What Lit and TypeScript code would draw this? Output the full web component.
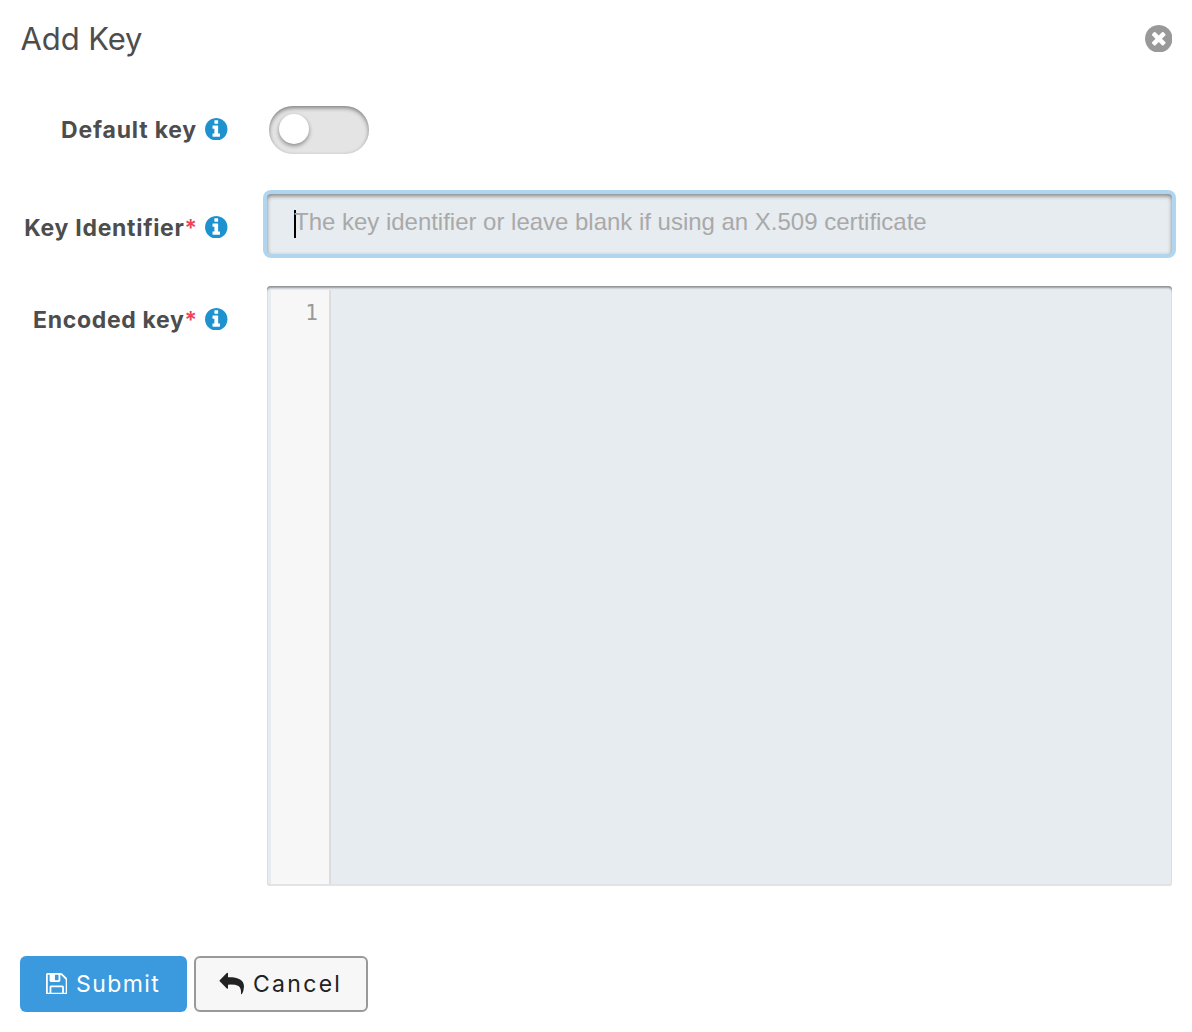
import { LitElement, html, css, svg } from "lit";
import { customElement } from "lit/decorators.js";

const INFO = "M1152 1376v-160q0-14-9-23t-23-9h-96v-512q0-14-9-23t-23-9h-320q-14 0-23 9t-9 23v160q0 14 9 23t23 9h96v320h-96q-14 0-23 9t-9 23v160q0 14 9 23t23 9h448q14 0 23-9t9-23zm-128-896v-160q0-14-9-23t-23-9h-192q-14 0-23 9t-9 23v160q0 14 9 23t23 9h192q14 0 23-9t9-23zm640 416q0 209-103 385.5t-279.5 279.5-385.5 103-385.5-103-279.5-279.5-103-385.5 103-385.5 279.5-279.5 385.5-103 385.5 103 279.5 279.5 103 385.5z";
const CLOSE = "M1277 1122q0-26-19-45l-181-181 181-181q19-19 19-45 0-27-19-46l-90-90q-19-19-46-19-26 0-45 19l-181 181-181-181q-19-19-45-19-27 0-46 19l-90 90q-19 19-19 46 0 26 19 45l181 181-181 181q-19 19-19 45 0 27 19 46l90 90q19 19 46 19 26 0 45-19l181-181 181 181q19 19 45 19 27 0 46-19l90-90q19-19 19-46zm387-226q0 209-103 385.5t-279.5 279.5-385.5 103-385.5-103-279.5-279.5-103-385.5 103-385.5 279.5-279.5 385.5-103 385.5 103 279.5 279.5 103 385.5z";
const SAVE = "M512 1536h768v-384h-768v384zm896 0h128v-896q0-14-10-38.5t-20-34.5l-281-281q-10-10-34-20t-39-10v416q0 40-28 68t-68 28h-576q-40 0-68-28t-28-68v-416h-128v1280h128v-416q0-40 28-68t68-28h832q40 0 68 28t28 68v416zm-384-928v-320q0-13-9.5-22.5t-22.5-9.5h-192q-13 0-22.5 9.5t-9.5 22.5v320q0 13 9.5 22.5t22.5 9.5h192q13 0 22.5-9.5t9.5-22.5zm640 32v928q0 40-28 68t-68 28h-1344q-40 0-68-28t-28-68v-1344q0-40 28-68t68-28h928q40 0 88 20t76 48l280 280q28 28 48 76t20 88z";

const glyph = (d: string) => svg`<path d=${d} fill="currentColor"></path>`;

@customElement("app-root")
export class AppRoot extends LitElement {
  static styles = css`
    :host { display: block; font-family: Inter, "Liberation Sans", sans-serif; color: #4d4d4d; }
    * { box-sizing: border-box; }
    .dialog { height: 1032px; background: #fff; display: flex; flex-direction: column; }
    .head { height: 78px; padding: 0 20px 1px 20.5px; display: flex; align-items: center; justify-content: space-between; }
    .title { margin: 0; font-size: 31px; font-weight: 400; line-height: 40px; letter-spacing: -0.1px; }
    .close { width: 27.5px; height: 27.5px; color: #999; display: block; }
    .row { display: grid; grid-template-columns: 227.5px 1fr; column-gap: 39.5px; padding-right: 20px; }
    .label { display: flex; justify-content: flex-end; align-items: center; height: 32px; font-size: 23px; font-weight: 700; letter-spacing: 0.7px; white-space: nowrap; }
    .req { color: #f04159; font-weight: 600; letter-spacing: 0; }
    .info { width: 22.5px; height: 22.5px; color: #1e91cf; margin-left: 8px; margin-top: -2px; }
    .first { margin-top: 28px; }
    .first .label { margin-top: 8px; letter-spacing: 0.8px; }
    .toggle { width: 100px; height: 48px; margin-left: 2px; border-radius: 24px; background: #e4e4e4; padding: 8px 10px; box-shadow: inset 0 2px 4px rgba(0,0,0,.45); }
    .knob { width: 30px; height: 30px; border-radius: 50%; background: #fff; box-shadow: 0 2px 4px rgba(0,0,0,.4); }
    .second { margin-top: 40px; }
    .second .label { margin-top: 18px; }
    .input { height: 60px; border-radius: 4px; background: #e7ecf0; padding: 16px 27px; display: flex; align-items: flex-start; box-shadow: 0 0 0 4px #b1d5ef, inset 0 2px 4px rgba(0,0,0,.45); }
    .caret { width: 2px; height: 28px; background: #000; margin-right: -2px; }
    .placeholder { font: 24px/24px "Liberation Sans", Arial, sans-serif; letter-spacing: -0.016px; color: #a9a9a9; white-space: nowrap; }
    .third { margin-top: 32px; }
    .third .label { margin-top: 18px; letter-spacing: 0.68px; }
    .editor { height: 600px; border-radius: 4px; background: #e7ecf0; padding: 4px 0 2px 4px; display: flex; box-shadow: inset 0 -2px 0 #e2e3e4, inset 0 0 1px rgba(0,0,0,.45), inset 0 3px 2px -1px rgba(0,0,0,.35); }
    .gutter { width: 60px; background: #f7f7f7; border-right: 2px solid #ddd; padding: 10px 11px; text-align: right; font: 21px/26px "DejaVu Sans Mono", monospace; color: #999; }
    .actions { margin-top: 70px; padding-left: 20px; display: flex; gap: 7px; }
    .btn { height: 56px; border-radius: 6px; display: flex; align-items: center; padding-bottom: 1px; font-size: 23px; white-space: nowrap; }
    .submit { width: 167px; background: #3b99dd; color: #fff; padding-left: 25.5px; letter-spacing: 1.4px; }
    .cancel { width: 174px; background: #f7f7f7; color: #222; border: 2px solid #999; padding-left: 22.5px; letter-spacing: 2.3px; }
    .save { width: 21.5px; height: 21.5px; margin-right: 9px; }
    .reply { width: 26px; height: 24px; margin-right: 8.5px; }
  `;

  private info() {
    return html`<svg class="info" viewBox="128 128 1536 1536">${glyph(INFO)}</svg>`;
  }

  render() {
    return html`
      <div class="dialog">
        <header class="head">
          <h1 class="title">Add Key</h1>
          <svg class="close" viewBox="128 128 1536 1536">${glyph(CLOSE)}</svg>
        </header>
        <div class="row first">
          <div class="label"><span>Default key</span>${this.info()}</div>
          <div class="toggle"><div class="knob"></div></div>
        </div>
        <div class="row second">
          <div class="label"><span>Key Identifier<span class="req">*</span></span>${this.info()}</div>
          <div class="input"><span class="caret"></span><span class="placeholder">The key identifier or leave blank if using an X.509 certificate</span></div>
        </div>
        <div class="row third">
          <div class="label"><span>Encoded key<span class="req">*</span></span>${this.info()}</div>
          <div class="editor"><div class="gutter">1</div></div>
        </div>
        <div class="actions">
          <div class="btn submit"><svg class="save" viewBox="128 128 1536 1536">${glyph(SAVE)}</svg><span>Submit</span></div>
          <div class="btn cancel"><svg class="reply" viewBox="0 0 26 24">${glyph("M0.7 9.2Q0.2 8.7 0.7 8.2L7.8 1Q9 0.2 9 1.5V5.2C19 5 25 7.5 25 14.5Q24.8 19 23 22Q22.2 22.8 22 21.5Q22.4 16 19.5 14Q16 12.3 9 12.7V16Q9 17.3 7.8 16.5Z")}</svg><span>Cancel</span></div>
        </div>
      </div>`;
  }
}
